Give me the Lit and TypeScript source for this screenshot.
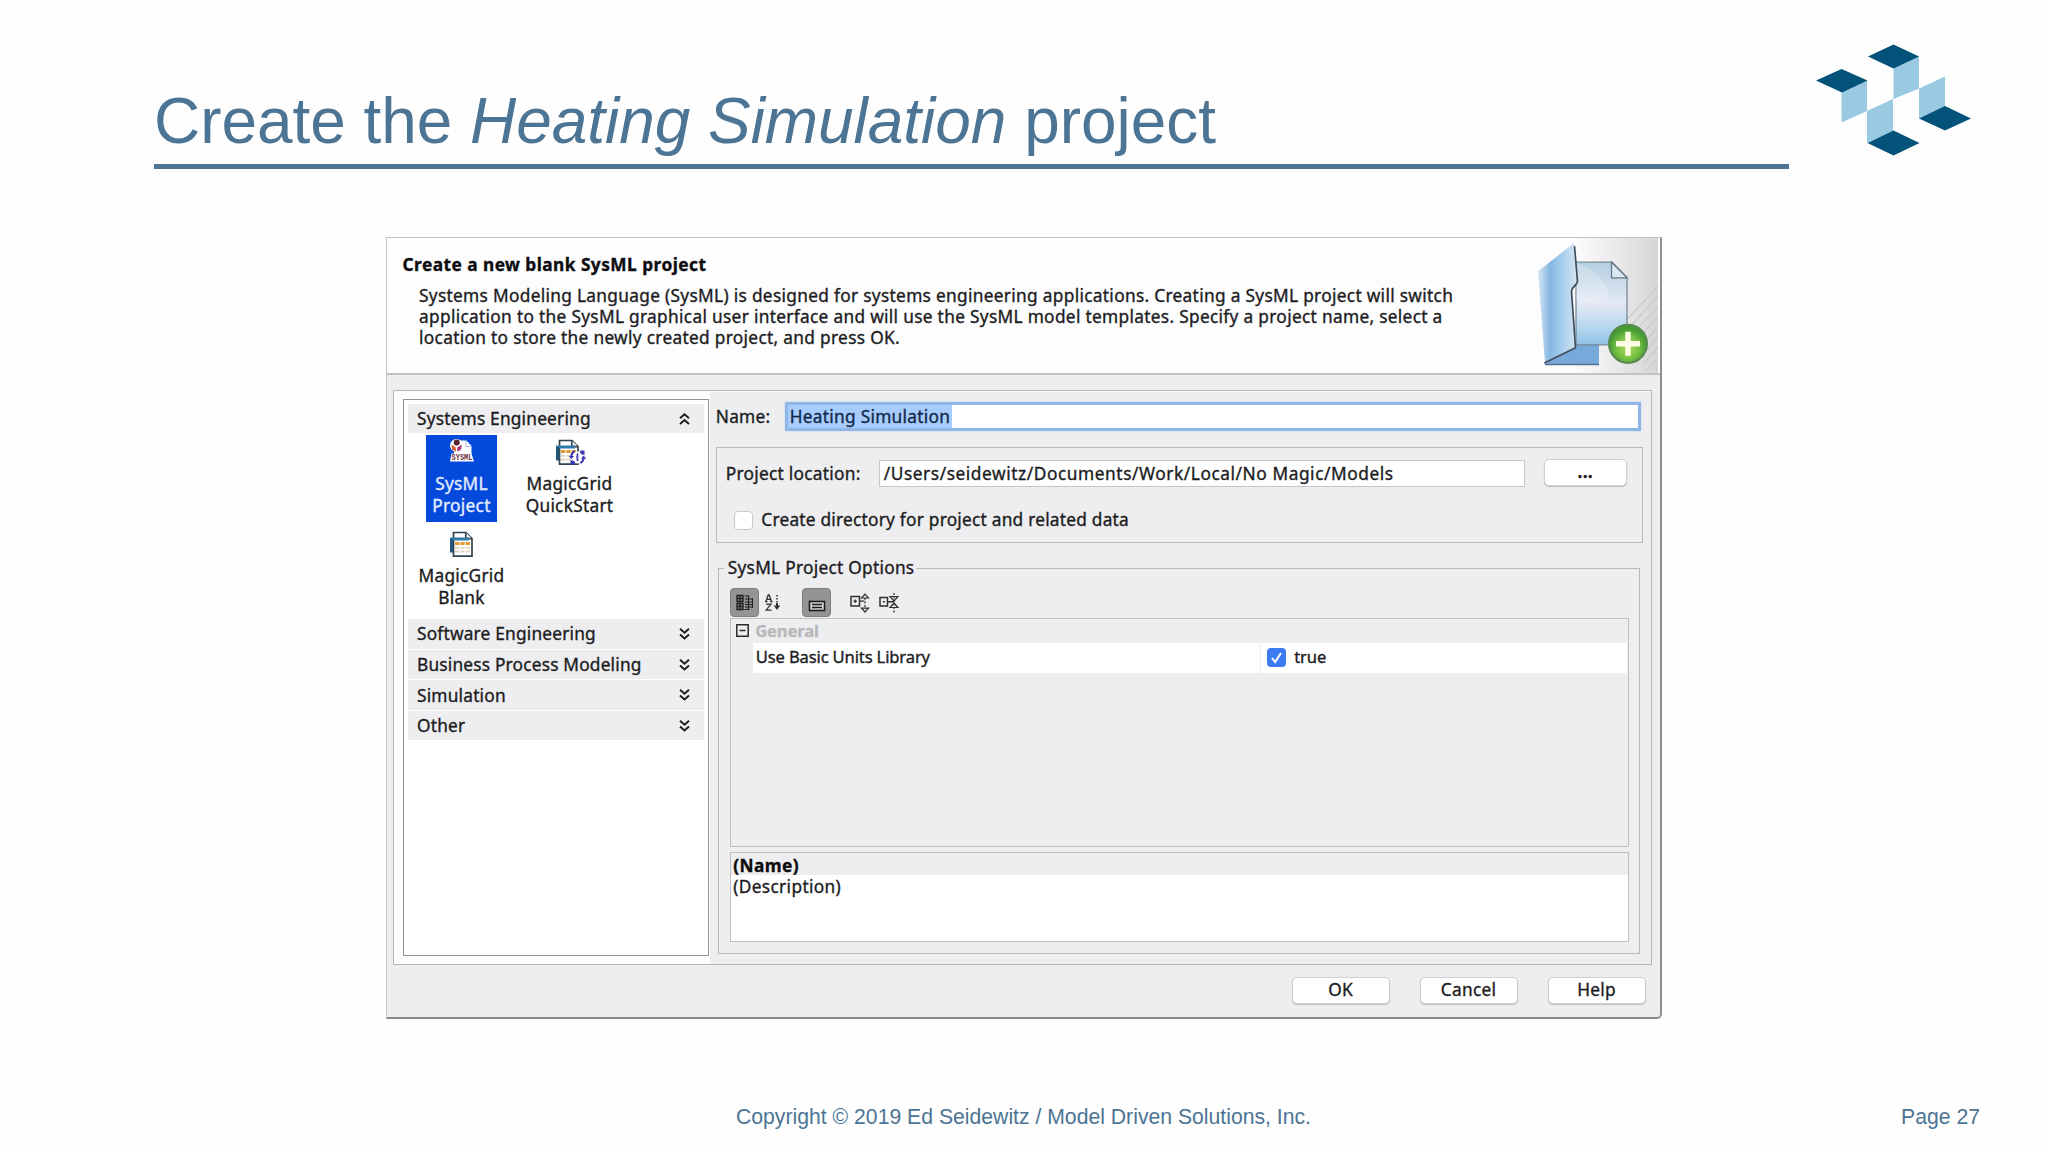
import { LitElement, html, css, svg } from "lit";
import { customElement, property } from "lit/decorators.js";

const sheet = svg`
  <path d="M3.500 8V1.500H16L22 7.500v17.700H3.500z" fill="#fff" stroke="#33434f" stroke-width="1.700"/>
  <path d="M15.800 1.500v6.200H22" fill="#fff" stroke="#33434f" stroke-width="1.700"/>
  <rect x="0" y="6.500" width="19" height="3" fill="#2e7ba8"/>
  <rect x="0" y="8" width="3" height="13.500" fill="#23567a"/>
  <path d="M5 12.500h15" stroke="#e39a34" stroke-width="3" stroke-dasharray="4.300 1"/>
  <path d="M5 16.800h15M5 20.500h15" stroke="#e0d6c0" stroke-width="1.800" stroke-dasharray="4.300 1"/>`;

@customElement("tile-icon")
class TileIcon extends LitElement {
  @property() kind = "blank";
  static styles = css`
    :host{display:block;height:27px}
    svg{display:block;overflow:visible}
    .tag{font:700 8.500px "Liberation Mono",monospace;letter-spacing:0;fill:#6d2c40;-webkit-text-stroke:0}`;
  render() {
    if (this.kind === "sysml")
      return html`<svg width="24" height="27" viewBox="0 0 24 27">
        <path d="M4 1.500h12.500l5 5.500v7.500l2.500 8H0l1.500-8H4z" fill="#fff"/>
        <circle cx="6.500" cy="6.500" r="6.500" fill="#fff"/>
        <path d="M16 2v5.500h5" fill="none" stroke="#a9b8e8" stroke-width="1"/>
        <circle cx="6.700" cy="3.600" r="3" fill="#55242c"/>
        <path d="M1.500 5.500l4.300 3v4.300l-3.800-2.300z" fill="#e0602d"/>
        <path d="M11.700 5.500L7.200 8.500v4.300l4-2.300z" fill="#b23a7c"/>
        <text class="tag" x="1.500" y="21" textLength="21" lengthAdjust="spacingAndGlyphs">SYSML</text>
      </svg>`;
    return html`<svg width="24" height="27" viewBox="0 0 24 27">${sheet}
      ${this.kind === "quick"
        ? svg`<circle cx="21.500" cy="18.500" r="6" fill="#fff"/>
          <path d="M15.300 17a6.500 6.500 0 0 1 3.400-4.800M27.600 19.500a6.500 6.500 0 0 1-3.200 4.600M24.500 12.700l2.600 2.600M18.700 24.300l-2.600-2.600" fill="none" stroke="#3b35b5" stroke-width="2"/>
          <path d="M23.500 11.500h5v5zM19.500 25.500h-5v-5zM12.800 17h5.200l-2.600 3.200zM25 19.800h5.200l-2.600-3.200z" fill="#3b35b5"/>
          <path d="M21.500 14.500v2.500M21.500 19v3M20 18h2.500" stroke="#3b35b5" stroke-width="1.700"/>`
        : ""}</svg>`;
  }
}

@customElement("section-bar")
class SectionBar extends LitElement {
  @property() label = "";
  @property({ type: Boolean }) open = false;
  static styles = css`
    :host{display:flex;box-sizing:border-box;height:29.300px;padding:0 14px 0 9px;background:#eeeef0;align-items:center;justify-content:space-between;line-height:29px;letter-spacing:.2px}
    svg{display:block}`;
  render() {
    return html`<span>${this.label}</span>
      <svg width="11" height="14" viewBox="0 0 11 14" fill="none" stroke="#1c1c1e" stroke-width="1.900">
        ${this.open ? svg`<path d="M1 6.200L5.500 2.200l4.500 4M1 12l4.500-4 4.500 4"/>` : svg`<path d="M1 1.700l4.500 4 4.500-4M1 7.500l4.500 4 4.500-4"/>`}
      </svg>`;
  }
}

@customElement("app-root")
class AppRoot extends LitElement {
  static styles = css`
    :host{display:block;width:2048px;height:1152px;overflow:hidden;background:#fefefe;color:#4c7494;font-family:"Liberation Sans",Arial,sans-serif}
    *{box-sizing:border-box}
    svg{display:block}
    .slide{display:flex;flex-direction:column;height:1152px}
    .top{display:flex;height:237px;padding-left:154px}
    .heading{width:1635px;height:169px;padding-top:83.500px;border-bottom:5px solid #4c7494}
    h1{margin:0;font-weight:400;font-size:63.900px;line-height:74px;white-space:nowrap}
    .logo{margin:40px 0 0 22px}
    .foot{display:flex;justify-content:space-between;margin-top:83px;padding:0 68px 0 736px;font-size:21.200px;line-height:29px;white-space:nowrap}
    .dialog{width:1276px;height:782px;margin-left:386px;background:#eeeef0;border:1px solid #c3c3c6;border-right:2px solid #8f8f92;border-bottom:2px solid #88888b;border-radius:0 0 5px 0;color:#1c1c1e;font-family:"Noto Sans","Open Sans",sans-serif;font-size:17.300px;letter-spacing:.27px;white-space:nowrap;-webkit-text-stroke:.35px currentColor}
    .head{display:flex;justify-content:space-between;height:137px;background:#fdfdfe;border-bottom:2px solid #c3c3c6}
    .intro{padding:16px 0 0 15.500px}
    .intro b{display:block;line-height:22px;color:#0c0c0e;letter-spacing:.46px}
    .intro p{margin:8.500px 0 0 16.500px;line-height:21.300px;letter-spacing:.31px}
    .panel{display:flex;height:575px;margin:15px 8px 0 6px;border:1px solid #b5b5b8;box-shadow:inset 0 1px #fafafa}
    .left{width:316px;padding:8px 0 0 9px;background:#fdfdfe}
    .list{width:306px;height:557px;border:1.500px solid #939396;padding:4px 4px 0 4px;background:#fff}
    .tiles{display:grid;grid-template-columns:108px 107px;grid-template-rows:92px 94px;height:186px}
    .tile{display:flex;flex-direction:column;align-items:center;width:71px;height:87px;margin:2px 0 0 18px;padding-top:4px;line-height:21.300px;text-align:center}
    .tile span{margin-top:7px}
    .tile.on{background:#0349dc;color:#e4edff}
    .tile.quick tile-icon{margin-left:-4px}
    .bars{display:grid;gap:1.300px}
    .right{display:flex;flex-direction:column;width:942px;padding:11px 0 0 6px}
    .name{display:flex;align-items:center;height:29px}
    .name label{width:69px}
    .focus{width:856px;height:29px;border:3px solid #8fb6e4;padding:0;background:#fff;display:flex;box-shadow:0 0 2px #b9d3f0}
    .sel{display:block;height:23px;line-height:23px;padding:0 2px;background:#a6cdfd;color:#14284a}
    .group{width:927px;height:96px;margin-top:16px;border:1.500px solid #b9b9bc;padding:11px 14px 0 9px}
    .loc{display:flex;align-items:center;height:28px}
    .loc label{width:153px}
    .path{width:646px;height:27px;border:1px solid #c6c6c9;background:#fff;padding-left:4px;line-height:25px;letter-spacing:.57px}
    .btn{display:block;height:27px;border-radius:5px;background:#fff;border:1px solid #d0d0d3;box-shadow:0 1px 1px #bcbcbf;line-height:24px;text-align:center}
    .more{width:83px;margin-left:19px;margin-top:-1px;line-height:24px;font-weight:700}
    .chk{display:flex;align-items:center;margin:22px 0 0 8.500px;height:22px;line-height:22px;gap:8px;letter-spacing:.23px}
    .box{width:19px;height:19px;border-radius:4px;background:#fff;border:1px solid #cacacd}
    .opts{width:922px;height:386px;margin:25px 0 0 2px;border:1.500px solid #b9b9bc;padding:0 0 0 11.500px}
    .legend{display:block;width:192px;height:20px;line-height:22px;margin:-12px 0 0 -6px;padding-left:3.500px;background:#eeeef0}
    .tools{display:flex;align-items:center;height:29px;margin-top:11px}
    .tb{width:29px;height:29px;border-radius:4px;background:#949496;border:1px solid #7f7f82}
    .az{margin-left:6px}.desc{margin-left:22px}.exp{margin-left:19px}.col{margin-left:9px}
    .grid{width:899px;height:229px;border:1.500px solid #bfbfc2;border-top-color:#c2c2c5;font-size:16.600px;letter-spacing:-.15px;margin-top:.500px}
    .cat{display:flex;align-items:center;height:24px;padding-left:5px;gap:6px;color:#b9b9bc;font-weight:700;line-height:24px}
    .cat svg{margin-top:-1px}
    .row{display:flex;margin:0 1px 0 22px;height:30px;background:#fff;line-height:28px}
    .row .k{width:508px;padding-left:2.500px;border-right:1px solid #ececee}
    .row .v{display:flex;align-items:center;padding-left:6px;gap:8px}
    .row .v span{margin-top:-2px}
    .row svg{margin-top:-1px}
    .info{width:899px;height:90px;margin-top:5px;border:1.500px solid #bfbfc2;background:#fff;line-height:21.300px}
    .info b,.info span{display:block;padding-left:2px}
    .info b{height:22px;line-height:25px;background:#eeeef0;color:#0c0c0e;letter-spacing:.4px}
    .info span{padding-top:1px;letter-spacing:.35px}
    .acts{display:flex;justify-content:flex-end;gap:30px;padding:12px 14.500px 0 0}
    .acts .btn{width:98px}
  `;

  render() {
    return html`<div class="slide">
      <header class="top">
        <div class="heading"><h1>Create the <i>Heating Simulation</i> project</h1></div>
        <svg class="logo" width="170" height="120" viewBox="0 0 170 120">
          <path fill="#9ac9e2" d="M30.500 52L56 40v31L30.500 82.500zM82.500 27.500L108 16v32.500L82.500 59zM108 48.500L134 36.500v31L108 78.500zM56 71l26-12v32L56 103z"/>
          <path fill="#03527a" d="M82.500 4.500L108 16.500 82.500 28.500 57 16.500zM30.500 29L56.500 40.500 31 52.500 5 40.500zM134 66l26 12.500-26 12-26-12zM82.500 90.500l26 12.500-26 12.500L56.500 103z"/>
        </svg>
      </header>
      <main class="dialog">
        <div class="head">
          <div class="intro">
            <b>Create a new blank SysML project</b>
            <p>Systems Modeling Language (SysML) is designed for systems engineering applications. Creating a SysML project will switch<br>application to the SysML graphical user interface and will use the SysML model templates. Specify a project name, select a<br>location to store the newly created project, and press OK.</p>
          </div>
          ${this.art()}
        </div>
        <div class="panel">
          <div class="left"><div class="list">
            <section-bar label="Systems Engineering" open></section-bar>
            <div class="tiles">
              <div class="tile on"><tile-icon kind="sysml"></tile-icon><span>SysML<br>Project</span></div>
              <div class="tile quick"><tile-icon kind="quick"></tile-icon><span>MagicGrid<br>QuickStart</span></div>
              <div class="tile"><tile-icon></tile-icon><span>MagicGrid<br>Blank</span></div>
            </div>
            <div class="bars">
              ${["Software Engineering", "Business Process Modeling", "Simulation", "Other"].map((l) => html`<section-bar label=${l}></section-bar>`)}
            </div>
          </div></div>
          <div class="right">
            <div class="name"><label>Name:</label><div class="focus"><span class="sel">Heating Simulation</span></div></div>
            <div class="group">
              <div class="loc"><label>Project location:</label><div class="path">/Users/seidewitz/Documents/Work/Local/No Magic/Models</div><span class="btn more">...</span></div>
              <div class="chk"><i class="box"></i><span>Create directory for project and related data</span></div>
            </div>
            <div class="opts">
              <span class="legend">SysML Project Options</span>
              ${this.tools()}
              <div class="grid">
                <div class="cat"><svg width="13" height="13" viewBox="0 0 13 13"><path d="M.800.800h11.400v11.400H.800zM3.500 6.500h6" fill="none" stroke="#2a2a2c" stroke-width="1.500"/></svg><span>General</span></div>
                <div class="row"><span class="k">Use Basic Units Library</span><span class="v">
                  <svg width="19" height="19" viewBox="0 0 19 19"><rect width="19" height="19" rx="4" fill="#3b7df0"/><path d="M5 10l3.200 4L14 5" fill="none" stroke="#fff" stroke-width="2"/></svg><span>true</span></span></div>
              </div>
              <div class="info"><b>(Name)</b><span>(Description)</span></div>
            </div>
          </div>
        </div>
        <div class="acts"><span class="btn">OK</span><span class="btn">Cancel</span><span class="btn">Help</span></div>
      </main>
      <footer class="foot"><span>Copyright © 2019 Ed Seidewitz / Model Driven Solutions, Inc.</span><span>Page 27</span></footer>
    </div>`;
  }

  tools() {
    return html`<div class="tools">
      <svg class="tb" width="29" height="29" viewBox="1 1 27 27" fill="none" stroke="#1b1b1d">
        <path d="M7 7.500h6v6H7zM7 15.500h6v6H7zM7 10.500h6M10 7.500v6M7 18.500h6M10 15.500v6" stroke-width="1.300"/>
        <path d="M14.500 8h5M15 11h8M15 14h8M15 16.500h8M15 19h8M14.500 21.500h5" stroke-width="1.200"/><path d="M18.500 8v13.500M22.500 10.500v9" stroke-width="1"/>
      </svg>
      <svg class="az" width="15" height="18" viewBox="0 0 15 18" fill="none" stroke="#303032">
        <path d="M1 7.500L3.200 1h1L6.500 7.500M2 5.300h3.500M0 7.700h2.500M5 7.700h2.500M1 10.200h5L1 16.200h5.500" stroke-width="1.300"/>
        <path d="M12 1v9" stroke-width="1.500" stroke-dasharray="1.500 1.500"/><path d="M12 9v4" stroke-width="2"/><path d="M8.800 11.500h6.400L12 16z" fill="#303032" stroke="none"/>
      </svg>
      <svg class="tb desc" width="29" height="29" viewBox="1 1 27 27" fill="none" stroke="#1b1b1d">
        <rect x="7.500" y="13.500" width="15" height="9" fill="#d7d7d9" stroke-width="1.600"/><path d="M10 16.500h10M10 19.500h10" stroke-width="1.400"/>
      </svg>
      <svg class="exp" width="20" height="20" viewBox="0 0 20 20" fill="none" stroke="#303032">
        <path d="M1 3.500h8.500V13H1z" stroke-width="1.500"/><path d="M3.500 8.200h3.500M5.200 6.500v3.500M9.500 8.200h5" stroke-width="1.300"/>
        <path d="M15 5v11" stroke-width="1.200" stroke-dasharray="2 1.500"/><path d="M11.500 5L15 1.200 18.500 5zM11.500 15.200h7L15 19z" stroke-width="1.200"/>
      </svg>
      <svg class="col" width="20" height="20" viewBox="0 0 20 20" fill="none" stroke="#303032">
        <path d="M1 4.500h7.500V13H1z" stroke-width="1.500"/><path d="M3.800 8.700h2M8.500 8.700h6" stroke-width="1.400"/>
        <path d="M15 0v19.500" stroke-width="1.200" stroke-dasharray="2 1.500"/><path d="M11 3.500h8L15 8zM11 14.500h8L15 10z" stroke-width="1.200"/>
      </svg>
    </div>`;
  }

  art() {
    return html`<svg width="126" height="135" viewBox="0 0 126 134" preserveAspectRatio="none">
      <defs>
        <linearGradient id="bg" x1="0" x2="1"><stop offset=".3" stop-color="#fdfdfe"/><stop offset=".62" stop-color="#ececee"/><stop offset="1" stop-color="#d6d6d8"/></linearGradient>
        <linearGradient id="fold" x1="0" x2="1"><stop offset="0" stop-color="#d6e6f2"/><stop offset=".3" stop-color="#86b8e2"/><stop offset=".6" stop-color="#a4cbeb"/><stop offset="1" stop-color="#d7e6f4"/></linearGradient>
        <linearGradient id="page" x1="0" y1="0" x2="0" y2="1"><stop offset="0" stop-color="#b3cfe1"/><stop offset=".5" stop-color="#e4e9f5"/><stop offset=".8" stop-color="#b3d6ee"/><stop offset="1" stop-color="#8fc0e4"/></linearGradient>
        <radialGradient id="plus" cy=".6"><stop offset="0" stop-color="#b4d85a"/><stop offset=".6" stop-color="#74c043"/><stop offset="1" stop-color="#449a33"/></radialGradient>
      </defs>
      <rect width="124" height="134" fill="url(#bg)"/>
      <path d="M92 82l32-34M94 90l30-32M98 96l26-28M104 100l20-22M110 104l14-16M112 112l12-14M110 124l14-16M112 132l12-12" stroke="#c6c6c9" stroke-width="1" fill="none"/>
      <path d="M9 125l34-20h22v20z" fill="#78a9db"/><path d="M11 125.500h54" stroke="#54708e" stroke-width="1.500"/>
      <path d="M42 24h36l15 15v67H42z" fill="url(#page)" stroke="#788995" stroke-width="1.300"/>
      <path d="M42 25c20 5 29 17 33 33-10 7-22 6-33 4z" fill="#fff" opacity=".22"/>
      <path d="M77.500 24v15.500H93z" fill="#dce9f3" stroke="#667985" stroke-width="1.300"/>
      <path d="M4 33L40 5l3 38q-1 5-5 7l4 58-31 17z" fill="url(#fold)"/>
      <path d="M40.500 8l3 35c0 4-6 5-6 10l4 56-31 15" fill="none" stroke="#3f4e5c" stroke-width="1.700"/>
      <circle cx="94" cy="105" r="19" fill="url(#plus)" stroke="#5a8a50" stroke-width="2"/>
      <path d="M94 93v24M82 105h24" stroke="#fdfde6" stroke-width="5.500"/>
    </svg>`;
  }
}
